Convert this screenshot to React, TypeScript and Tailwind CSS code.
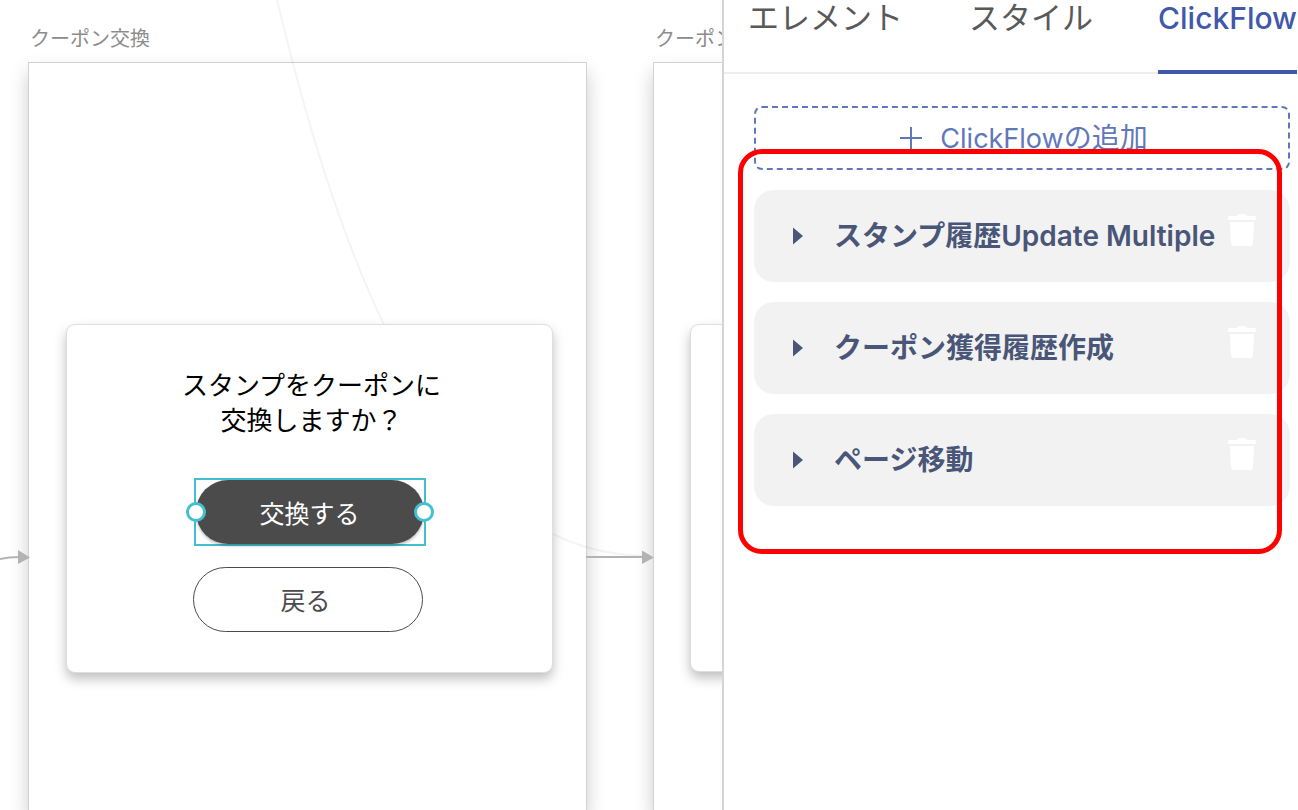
type Flow = { id: string; title: string };

const FLOWS: Flow[] = [
  { id: "stamp-update", title: "スタンプ履歴Update Multiple" },
  { id: "coupon-create", title: "クーポン獲得履歴作成" },
  { id: "page-move", title: "ページ移動" },
];

function SelectionHandle({ side }: { side: "left" | "right" }) {
  return (
    <span
      className={`absolute top-1/2 size-5 -translate-y-1/2 rounded-full border-[3px] border-[#42c0d2] bg-white ${
        side === "left" ? "-left-2.5" : "-right-2.5"
      }`}
    />
  );
}

function Dialog() {
  return (
    <div className="relative z-20 mr-[33px] ml-[37px] mt-[261px] flex flex-col items-center rounded-[9px] border border-[#dedede] bg-white pt-[41px] pb-[40px] shadow-[0_6px_12px_rgba(0,0,0,0.25)]">
      <p className="pl-1 text-center text-[26px] leading-[35px] text-black">
        スタンプをクーポンに
        <br />
        交換しますか？
      </p>
      <div className="relative mt-[42px] border-2 border-[#42c0d2]">
        <button
          type="button"
          className="block h-16 w-[228px] rounded-full bg-[#4b4b4b] pt-0.5 text-[25px] text-white shadow-[0_2px_3px_rgba(0,0,0,0.25)]"
        >
          交換する
        </button>
        <SelectionHandle side="left" />
        <SelectionHandle side="right" />
      </div>
      <button
        type="button"
        className="mt-[21px] mr-1 h-[65px] w-[230px] rounded-full border border-[#4b4b4b] bg-white pr-1 text-[25px] text-[#4b4b4b]"
      >
        戻る
      </button>
    </div>
  );
}

function Artboard({ name, empty }: { name: string; empty?: boolean }) {
  return (
    <section className="flex w-[559px] shrink-0 flex-col">
      <h2 className="pt-[24px] pb-[10px] pl-0.5 text-[20px] leading-7 text-[#8c8c8c]">{name}</h2>
      <div className="grow border border-b-0 border-[#d2d2d2] bg-white shadow-[0_10px_18px_rgba(0,0,0,0.2)]">
        {empty ? (
          <div className="relative z-20 mr-[33px] ml-[36px] mt-[261px] h-[348px] rounded-[9px] border border-[#dedede] bg-white shadow-[0_6px_12px_rgba(0,0,0,0.25)]" />
        ) : (
          <Dialog />
        )}
      </div>
    </section>
  );
}

function Connectors() {
  return (
    <svg
      className="pointer-events-none absolute top-0 left-0 z-10"
      width="722"
      height="810"
      viewBox="0 0 722 810"
      fill="none"
      aria-hidden="true"
    >
      <path d="M277 0C304 112 337 226 384 325C435 440 490 508 553 534C583 549 614 555 644 556" stroke="#000" strokeOpacity="0.045" strokeWidth="2" />
      <path d="M0 559Q9 557 19 557M586 557H644" stroke="#b3b3b3" strokeWidth="2" />
      <path d="M18 550L30 557.5L18 564ZM642 550.5L654 557.5L642 564Z" fill="#b3b3b3" />
    </svg>
  );
}

function TrashIcon() {
  return (
    <svg width="28" height="32" viewBox="0 0 28 32" fill="#fff" aria-hidden="true">
      <path d="M1 2H8.500Q10 0 11 0H17Q18 0 19.500 2H27Q28 2 28 3V5Q28 6 27 6H1Q0 6 0 5V3Q0 2 1 2Z" />
      <path d="M2 8H26L25 29Q24.800 32 22 32H6Q3.200 32 3 29Z" />
    </svg>
  );
}

function FlowRow({ flow }: { flow: Flow }) {
  return (
    <li className="flex h-[92px] rounded-[20px] bg-[#f2f2f2] pr-[34px] pl-[39px]">
      <button type="button" className="flex min-w-0 grow items-center gap-[31px] text-left text-[28px] leading-10 font-semibold whitespace-nowrap text-[#495678]">
        <svg width="10" height="18" viewBox="0 0 10 18" fill="currentColor" aria-hidden="true" className="shrink-0">
          <path d="M0 0.500L10 9L0 17.500Z" />
        </svg>
        {flow.title}
      </button>
      <button type="button" aria-label={`${flow.title}を削除`} className="mt-6 shrink-0 self-start">
        <TrashIcon />
      </button>
    </li>
  );
}

function Panel() {
  return (
    <aside className="relative z-30 w-[576px] shrink-0 border-l-2 border-[#d5d5d5] bg-white font-['Inter','Noto_Sans_CJK_JP',sans-serif]">
      <nav className="flex h-[74px] border-b-2 border-[#eeeeee] pr-px pl-6 text-[31px] leading-9 whitespace-nowrap text-[#595959]">
        <a href="#element">エレメント</a>
        <a href="#style" className="ml-[66px]">
          スタイル
        </a>
        <a href="#clickflow" aria-current="page" className="-mb-0.5 ml-auto border-b-4 border-[#4158ab] text-[30px] font-medium text-[#4158ab]">
          ClickFlow
        </a>
      </nav>
      <div className="pt-8 pr-2 pl-[30px]">
        <button
          type="button"
          className="flex h-16 w-full items-center justify-center gap-[18px] rounded-lg border-2 border-dashed border-[#6078ba] pl-1 text-[28px] leading-10 text-[#6078ba]"
        >
          <svg width="22" height="22" viewBox="0 0 22 22" stroke="currentColor" strokeWidth="2" aria-hidden="true">
            <path d="M0 11H22M11 0V22" />
          </svg>
          <span>
            <span className="text-[27px]">ClickFlow</span>の追加
          </span>
        </button>
        <ul className="mt-5 flex flex-col gap-5">
          {FLOWS.map((flow) => (
            <FlowRow key={flow.id} flow={flow} />
          ))}
        </ul>
      </div>
      <div className="pointer-events-none absolute top-[149px] right-4 left-[14px] h-[405px] rounded-[24px] border-[5px] border-[#ff0000]" />
    </aside>
  );
}

export default function App() {
  return (
    <div className="flex h-screen overflow-hidden bg-white font-['Noto_Sans_CJK_JP',sans-serif]">
      <main className="relative flex min-w-0 grow gap-[66px] overflow-hidden pl-[28px]">
        <Artboard name="クーポン交換" />
        <Artboard name="クーポン交換" empty />
        <Connectors />
      </main>
      <Panel />
    </div>
  );
}
